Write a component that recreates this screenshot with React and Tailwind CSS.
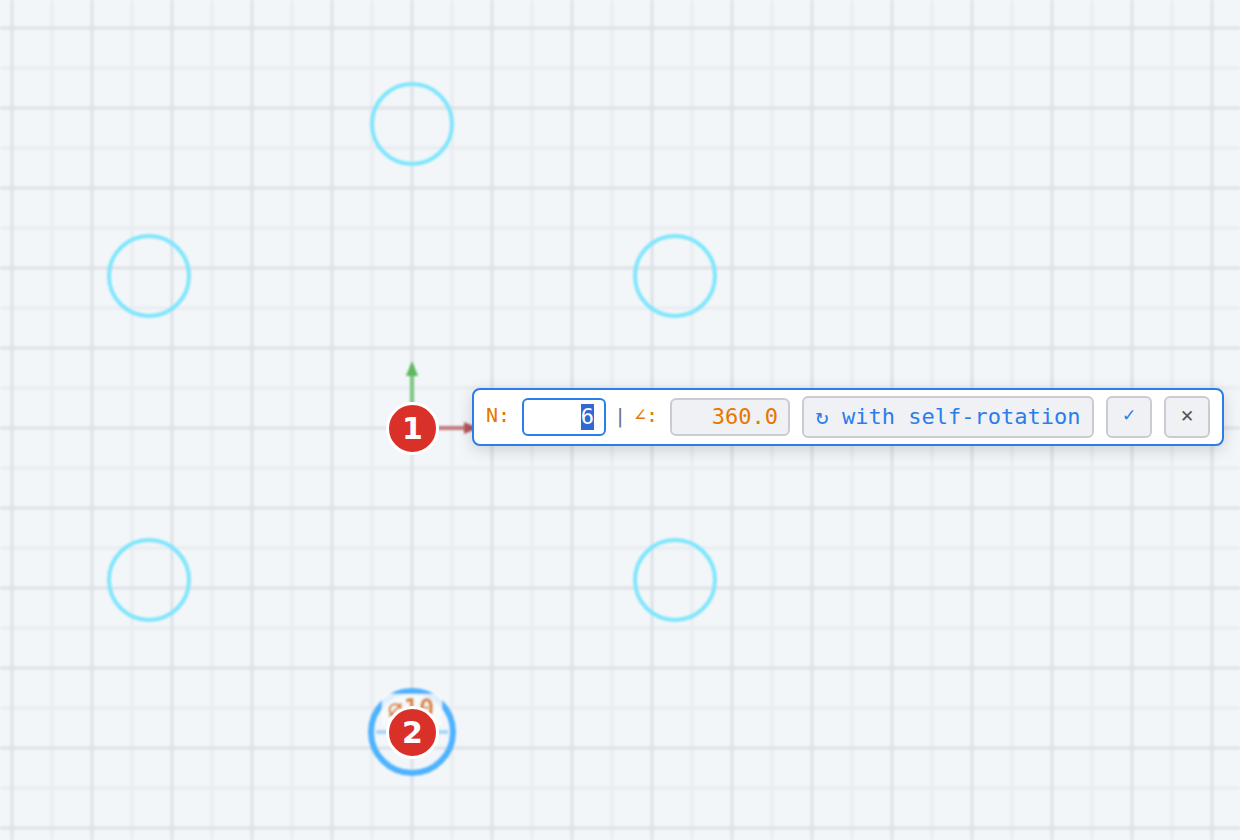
import React from 'react';

const verticals = Array.from({ length: 31 }, (_, i) => 12 + i * 40);
const horizontals = Array.from({ length: 21 }, (_, i) => 28 + i * 40);
const holes = [
    [412, 124],
    [149, 276],
    [675, 276],
    [149, 580],
    [675, 580],
];

function Canvas() {
    return (
        <svg className="absolute inset-0" width="1240" height="840" viewBox="0 0 1240 840">
            <defs>
                <filter id="soft" x="-5%" y="-5%" width="110%" height="110%">
                    <feGaussianBlur stdDeviation="0.8" />
                </filter>
            </defs>
            <g filter="url(#soft)">
                {/* minor grid first, major lines on top */}
                {verticals.map((x, i) => i % 2 === 1 && <line key={x} x1={x} y1="0" x2={x} y2="840" stroke="#e9ecf0" strokeWidth="3" />)}
                {horizontals.map((y, i) => i % 2 === 1 && <line key={y} x1="0" y1={y} x2="1240" y2={y} stroke="#e9ecf0" strokeWidth="3" />)}
                {verticals.map((x, i) => i % 2 === 0 && <line key={x} x1={x} y1="0" x2={x} y2="840" stroke="#dee1e6" strokeWidth="3" />)}
                {horizontals.map((y, i) => i % 2 === 0 && <line key={y} x1="0" y1={y} x2="1240" y2={y} stroke="#dee1e6" strokeWidth="3" />)}
            </g>
            <g filter="url(#soft)">
                {holes.map(([cx, cy]) => (
                    <circle key={cx + '-' + cy} cx={cx} cy={cy} r="40" fill="none" stroke="#7fe6fd" strokeWidth="4" />
                ))}

                {/* axes */}
                <line x1="412" y1="404" x2="412" y2="374" stroke="#7cc882" strokeWidth="4" />
                <polygon points="412,361 418,376 406,376" fill="#5cb85f" />
                <line x1="438" y1="428" x2="466" y2="428" stroke="#c67c80" strokeWidth="4" />
                <polygon points="478,428 464,422 464,434" fill="#b5565a" />

                {/* selected hole with its diameter label */}
                <circle cx="412" cy="732" r="41" fill="none" stroke="#4db3ff" strokeWidth="6" />
                <rect x="382" y="694" width="60" height="32" fill="#f8fafc" fillOpacity="0.85" />
                <line x1="376" y1="732" x2="448" y2="732" stroke="#a9d6fb" strokeWidth="4" />
                <text x="411" y="718" textAnchor="middle" fontFamily="'DejaVu Sans Mono', monospace" fontWeight="700" fontSize="26" fill="#d9863f">⌀10</text>
            </g>
        </svg>
    );
}

function Badge({ label, top }) {
    return (
        <div className={`absolute left-[386px] ${top} flex h-[53px] w-[53px] items-center justify-center rounded-full border-[3px] border-white bg-[#d9302a] font-['DejaVu_Sans',sans-serif] text-[30px] font-bold text-white`}>
            {label}
        </div>
    );
}

function App() {
    return (
        <div className="relative h-[840px] w-[1240px] overflow-hidden bg-[#f2f6f9]">
            <Canvas />
            <Badge label="1" top="top-[402px]" />
            <Badge label="2" top="top-[706px]" />

            <div className="absolute left-[472px] top-[388px] flex h-[58px] w-[752px] items-center gap-[12px] rounded-[8px] border-2 border-[#2b7de9] bg-white px-[12px] font-['DejaVu_Sans_Mono',monospace] shadow-[0_4px_16px_rgba(0,0,0,0.15)]">
                <span className="mb-[4px] w-[24px] text-[20px] leading-[24px] text-[#e67700]">N:</span>
                <div className="flex h-[38px] w-[84px] items-center justify-end rounded-[6px] border-2 border-[#2b7de9] bg-white px-[10px] text-[22px] text-[#1f2937]">
                    <span className="bg-[#3367d1] leading-[26px] text-white">6</span>
                </div>
                <span className="mb-[2px] flex w-[4px] justify-center font-['DejaVu_Sans',sans-serif] text-[20px] leading-[24px] text-[#6b7280]">|</span>
                <span className="mb-[4px] w-[24px] text-[20px] leading-[24px] text-[#e67700]">∠:</span>
                <div className="flex h-[38px] w-[120px] items-center justify-end rounded-[6px] border-2 border-[#c9ccd3] bg-[#f0f1f5] px-[10px] pb-[2px] text-[22px] text-[#e67700]">
                    360.0
                </div>
                <button className="flex h-[42px] w-[292px] items-center justify-center rounded-[6px] border-2 border-[#c9ccd3] bg-[#f0f1f5] pb-[2px] text-[22px] whitespace-pre text-[#2b7de9]">
                    ↻ with self-rotation
                </button>
                <button className="flex h-[42px] w-[46px] items-center justify-center rounded-[6px] border-2 border-[#c9ccd3] bg-[#f0f1f5] pb-[2px] font-['DejaVu_Sans',sans-serif] text-[17px] font-bold text-[#2b7de9]">
                    ✓
                </button>
                <button className="flex h-[42px] w-[46px] items-center justify-center rounded-[6px] border-2 border-[#c9ccd3] bg-[#f0f1f5] font-['DejaVu_Sans',sans-serif] text-[17px] font-bold text-[#4b5563]">
                    ✕
                </button>
            </div>
        </div>
    );
}

export default App;
